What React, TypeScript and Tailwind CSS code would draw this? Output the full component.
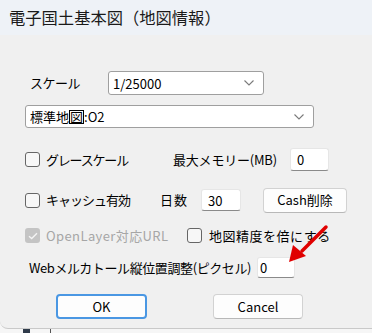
import React from "react";

const font = {
  fontFamily: '"Noto Sans CJK JP", "Noto Sans", sans-serif',
};

function Chevron() {
  return (
    <svg width="12" height="8" viewBox="0 0 12 8" className="text-[#7a7a7a]">
      <path d="M1.5 1.5 L6 6 L10.5 1.5" fill="none" stroke="currentColor" strokeWidth="1.1" />
    </svg>
  );
}

function Select({ value, className }: { value: React.ReactNode; className: string }) {
  return (
    <div
      className={
        "flex items-center justify-between rounded-[3px] border border-[#9f9f9f] bg-white pl-1 pr-2 text-[13px] text-black " +
        className
      }
    >
      <span className="leading-none">{value}</span>
      <Chevron />
    </div>
  );
}

function Field({ value, className }: { value: string; className: string }) {
  return (
    <div
      className={
        "flex items-center rounded-[3px] border border-[#e6e6e6] border-b-[#8a8a8a] bg-white pl-1.5 text-[13px] leading-none text-black " +
        className
      }
    >
      {value}
    </div>
  );
}

function Check({ checked, disabled }: { checked?: boolean; disabled?: boolean }) {
  if (checked) {
    return (
      <div className="flex h-[15px] w-[15px] items-center justify-center rounded-[3px] bg-[#c4c4c4]">
        <svg width="10" height="8" viewBox="0 0 10 8">
          <path d="M1 4.2 L3.7 6.6 L9 1.2" fill="none" stroke="#f4f4f4" strokeWidth="1.4" />
        </svg>
      </div>
    );
  }
  return (
    <div
      className={
        "h-[15px] w-[15px] rounded-[3px] border bg-[#f7f7f7] " +
        (disabled ? "border-[#c4c4c4]" : "border-[#666666]")
      }
    />
  );
}

function Button({ label, primary, className }: { label: string; primary?: boolean; className: string }) {
  return (
    <div
      className={
        "flex items-center justify-center rounded-[4px] bg-[#fdfdfd] text-[13px] text-black " +
        (primary ? "border-2 border-[#4a97e3]" : "border border-[#d2d2d2] border-b-[#b8b8b8]") +
        " " +
        className
      }
    >
      {label}
    </div>
  );
}

export default function App() {
  return (
    <div className="relative h-[333px] w-[372px] overflow-hidden bg-[#f6f6f6]" style={font}>
      {/* window */}
      <div className="flex h-[329px] flex-col rounded-bl-[8px] border-b border-[#c9c9c9] bg-[#f0f0f0]">
        {/* title bar */}
        <div className="flex h-[35px] items-center bg-[#eef2f7] pl-[9px] text-[16.3px] text-[#1a1a1a]">
          電子国土基本図（地図情報）
        </div>

        {/* scale */}
        <div className="mt-[36px] flex h-[24px] items-center">
          <span className="ml-[30px] w-[78px] text-[13px] tracking-[-0.5px] text-black">スケール</span>
          <Select value="1/25000" className="h-[24px] w-[156px]" />
        </div>

        <div className="mt-[10px] flex pl-[25px]">
          <Select
            value={
              <>
                標準地
                <span className="inline-block h-[14px] border border-black leading-[12px]">図</span>
                :O2
              </>
            }
            className="h-[23px] w-[289px]"
          />
        </div>

        {/* gray scale / memory */}
        <div className="mt-[20px] flex h-[23px] items-center pl-[25px] text-[13px] text-black">
          <Check />
          <span className="ml-[6px] w-[127px] tracking-[-1.2px]">グレースケール</span>
          <span className="w-[117px] tracking-[-0.2px]">最大メモリー(MB)</span>
          <Field value="0" className="h-[23px] w-[39px]" />
        </div>

        {/* cache */}
        <div className="mt-[17px] flex h-[24px] items-center pl-[25px] text-[13px] text-black">
          <Check />
          <span className="ml-[6px] w-[114px] tracking-[-1px]">キャッシュ有効</span>
          <span className="w-[41px] tracking-[1px]">日数</span>
          <Field value="30" className="h-[22px] w-[40px]" />
          <Button label="Cash削除" className="ml-[22px] h-[25px] w-[84px]" />
        </div>

        {/* open layer */}
        <div className="mt-[15px] flex h-[17px] items-center pl-[25px] text-[13px]">
          <Check checked disabled />
          <span className="ml-[6px] w-[141px] tracking-[0.4px] text-[#a6a6a6]">OpenLayer対応URL</span>
          <Check />
          <span className="ml-[7px] tracking-[0.5px] text-black">地図精度を倍にする</span>
        </div>

        {/* web mercator */}
        <div className="mt-[13px] flex h-[21px] items-center pl-[29px] text-[13px] text-black">
          <span className="w-[228px] whitespace-nowrap tracking-[-0.4px]">Webメルカトール縦位置調整(ピクセル)</span>
          <Field value="0" className="h-[21px] w-[38px] pl-[2px]" />
        </div>

        {/* buttons */}
        <div className="mt-[16px] flex h-[25px] pl-[56px]">
          <Button label="OK" primary className="h-[25px] w-[91px]" />
          <Button label="Cancel" className="ml-[66px] h-[25px] w-[90px]" />
        </div>
      </div>

      {/* taskbar hints below window */}
      <div className="absolute left-[23px] top-[329px] h-[4px] w-[7px] bg-[#2f3b4a]" />
      <div className="absolute left-[50px] top-[329px] h-[4px] w-[1px] bg-[#555]" />

      {/* red annotation arrow */}
      <svg className="absolute left-[282px] top-[222px]" width="50" height="46" viewBox="0 0 50 46">
        <path d="M44 5 L20 29" stroke="#e00000" strokeWidth="3.5" strokeLinecap="round" />
        <path d="M7 40 L11 23 L24 34 Z" fill="#e00000" />
      </svg>
    </div>
  );
}
